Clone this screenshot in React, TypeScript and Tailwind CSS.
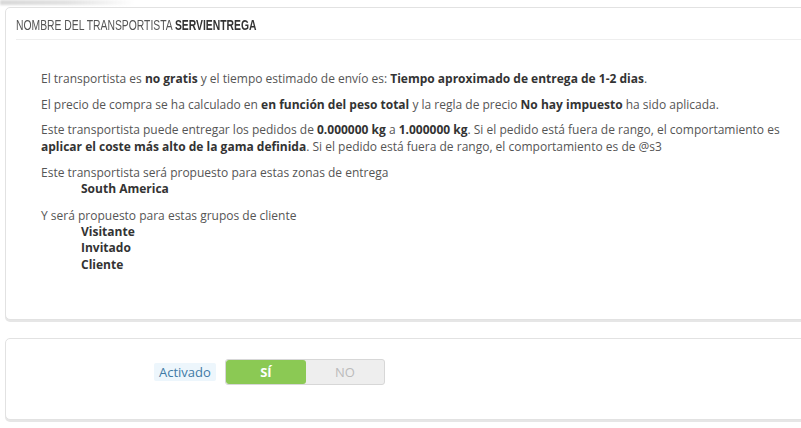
import React from "react";

const body = "font-['Open_Sans',sans-serif]";

const Panel = ({ children, className = "" }: { children: React.ReactNode; className?: string }) => (
  <div
    className={`ml-[5px] mr-[-20px] rounded-[5px] border border-[#e2e2e2] bg-white shadow-[0_2px_0_#e6e6e6] ${className}`}
  >
    {children}
  </div>
);

export default function App() {
  return (
    <div className={`relative w-[801px] h-[428px] overflow-hidden bg-white pt-[7px] ${body}`}>
      {/* shadow left by the bar above */}
      <div className="absolute left-0 top-0 h-[5px] w-[135px] bg-gradient-to-r from-[#d8d8d8] via-[#e2e2e2] to-transparent blur-[1px]" />

      <Panel className="pb-[45px]">
        <div className="mx-[10px] h-[32px] border-b border-[#eee] pt-[7px] text-[15px] leading-[18px] text-[#555]">
          <span className="inline-block origin-left scale-x-[0.69] whitespace-nowrap font-['Liberation_Sans',sans-serif]">
            NOMBRE DEL TRANSPORTISTA <b className="text-[#333]">SERVIENTREGA</b>
          </span>
        </div>
        <div className="pl-[35px] pt-[30px] text-[12px] leading-[17px] text-[#555]">
          <p className="mb-[9px]">
            El transportista es <b className="text-[#333]">no gratis</b> y el tiempo estimado de envío es:{" "}
            <b className="text-[#333]">Tiempo aproximado de entrega de 1-2 dias</b>.
          </p>
          <p className="mb-[8px]">
            El precio de compra se ha calculado en <b className="text-[#333]">en función del peso total</b> y la regla
            de precio <b className="text-[#333]">No hay impuesto</b> ha sido aplicada.
          </p>
          <p className="mb-[9px] pr-[30px]">
            Este transportista puede entregar los pedidos de <b className="text-[#333]">0.000000 kg</b> a{" "}
            <b className="text-[#333]">1.000000 kg</b>. Si el pedido está fuera de rango, el comportamiento es{" "}
            <b className="text-[#333]">aplicar el coste más alto de la gama definida</b>. Si el pedido está fuera de
            rango, el comportamiento es de @s3
          </p>
          <div className="mb-[9px]">
            Este transportista será propuesto para estas zonas de entrega
            <ul className="pl-[40px] font-bold leading-[16.7px] text-[#333]">
              <li>South America</li>
            </ul>
          </div>
          <div>
            Y será propuesto para estas grupos de cliente
            <ul className="pl-[40px] font-bold leading-[16.7px] text-[#333]">
              <li>Visitante</li>
              <li>Invitado</li>
              <li>Cliente</li>
            </ul>
          </div>
        </div>
      </Panel>

      <Panel className="mt-[18px] h-[82px]">
        <div className="flex items-center pl-[148px] pt-[20px]">
          <span className="rounded-[2px] bg-[#edf6fc] px-[5px] text-[13px] leading-[18px] text-[#3f7aa5]">
            Activado
          </span>
          <div className="ml-[9px] flex h-[26px] w-[160px] overflow-hidden rounded-[3px] border border-[#d7d7d7] bg-[#eee] text-[13px] leading-[24px]">
            <span className="w-[80px] rounded-[3px] bg-[#8bc954] text-center font-bold text-white">SÍ</span>
            <span className="flex-1 text-center text-[#bbb]">NO</span>
          </div>
        </div>
      </Panel>
    </div>
  );
}
